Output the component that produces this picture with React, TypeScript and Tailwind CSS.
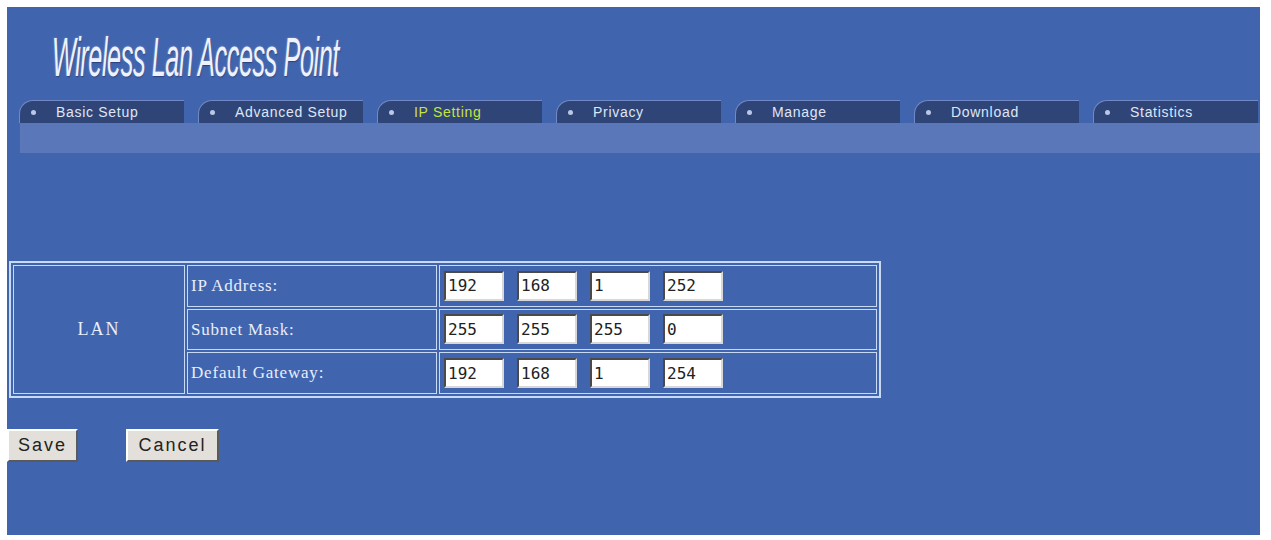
import { useState } from 'react';

const tabs = ['Basic Setup', 'Advanced Setup', 'IP Setting', 'Privacy', 'Manage', 'Download', 'Statistics'];

const rows = [
  { label: 'IP Address:', values: ['192', '168', '1', '252'] },
  { label: 'Subnet Mask:', values: ['255', '255', '255', '0'] },
  { label: 'Default Gateway:', values: ['192', '168', '1', '254'] },
];

const Octet = ({ value }: { value: string }) => {
  const [v, setV] = useState(value);
  return (
    <input
      value={v}
      onChange={(e) => setV(e.target.value)}
      className="w-[60px] h-[30px] bg-white pl-[2px] text-[16px] text-[#222] outline-none border-2 border-t-[#4a4a4a] border-l-[#4a4a4a] border-b-[#d8d8d8] border-r-[#d8d8d8] [font-family:'DejaVu_Sans_Mono',monospace]"
    />
  );
};

export default function App() {
  const [active, setActive] = useState('IP Setting');

  return (
    <div className="w-[1271px] h-[540px] bg-white pt-[7px] pl-[7px]">
      <div className="w-[1253px] h-[528px] bg-[#4064ae] flex flex-col">
        {/* Title */}
        <div className="h-[93px] pl-[45px] pt-[20px] overflow-hidden">
          <span className="inline-block origin-left scale-x-[0.46] italic text-[55px] leading-[60px] tracking-[-1px] text-[#eef2fd] [font-family:'Liberation_Sans',Arial,sans-serif] [text-shadow:1px_1px_2px_#233a78,0_0_3px_#8fa6dc]">
            Wireless Lan Access Point
          </span>
        </div>

        {/* Tabs */}
        <div className="flex gap-[14px] pl-[12px]">
          {tabs.map((t) => (
            <button
              key={t}
              onClick={() => setActive(t)}
              className="w-[165px] h-[23px] flex items-center bg-[#2f4477] rounded-tl-[14px] border-t border-l border-[#7189c6] text-left [font-family:'Liberation_Sans',Arial,sans-serif]"
            >
              <span className="w-[5px] h-[5px] rounded-full bg-[#b9c8e6] ml-[11px]" />
              <span className={`ml-[20px] text-[14px] tracking-[0.7px] ${active === t ? 'text-[#c9e23f]' : 'text-[#dfe6f5]'}`}>{t}</span>
            </button>
          ))}
        </div>
        <div className="ml-[13px] h-[30px] bg-[#5a78b9]" />

        {/* LAN settings */}
        <div className="mt-[108px] ml-[2px]">
          <table className="w-[872px] h-[137px] border-2 border-[#c8d9f2] border-separate border-spacing-[2px] text-[#e8eefb] [font-family:'Liberation_Serif','Times_New_Roman',serif]">
            <tbody>
              {rows.map((r, i) => (
                <tr key={r.label}>
                  {i === 0 && (
                    <td rowSpan={3} className="w-[172px] border border-[#c8d9f2] text-center text-[18px] tracking-[2px]">
                      LAN
                    </td>
                  )}
                  <td className="w-[250px] border border-[#c8d9f2] pl-[3px] text-[17px] tracking-[0.8px]">{r.label}</td>
                  <td className="border border-[#c8d9f2] pl-[4px]">
                    <div className="flex gap-[13px]">
                      {r.values.map((v, j) => (
                        <Octet key={j} value={v} />
                      ))}
                    </div>
                  </td>
                </tr>
              ))}
            </tbody>
          </table>
        </div>

        {/* Actions */}
        <div className="mt-[31px] flex gap-[48px]">
          <button className="w-[71px] h-[33px] bg-[#e3e0db] text-[18px] tracking-[2px] text-[#222] border-2 border-t-white border-l-white border-b-[#5a5a5a] border-r-[#5a5a5a] [font-family:'Liberation_Sans',Arial,sans-serif]">
            Save
          </button>
          <button className="w-[93px] h-[33px] bg-[#e3e0db] text-[18px] tracking-[2px] text-[#222] border-2 border-t-white border-l-white border-b-[#5a5a5a] border-r-[#5a5a5a] [font-family:'Liberation_Sans',Arial,sans-serif]">
            Cancel
          </button>
        </div>
      </div>
    </div>
  );
}
